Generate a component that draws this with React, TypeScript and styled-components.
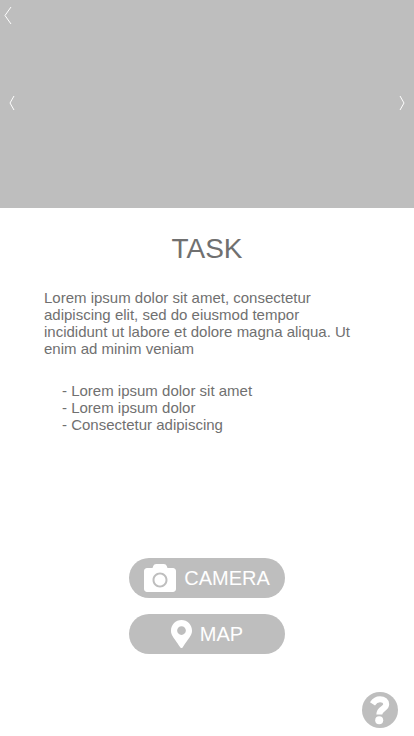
import React from "react";
import styled, { createGlobalStyle } from "styled-components";
import { FaCamera, FaMapMarkerAlt } from "react-icons/fa";

const GlobalStyle = createGlobalStyle`
  * { box-sizing: border-box; }
  html, body { margin: 0; background: #fff; }
  body, button { font-family: "Liberation Sans", Helvetica, Arial, sans-serif; }
`;

const Screen = styled.div`
  min-height: 100vh;
  display: flex;
  flex-direction: column;
  color: #707070;
`;

const Hero = styled.header`
  height: 208px;
  display: flex;
  flex-direction: column;
  background: #bebebe;
`;

const IconButton = styled.button`
  display: flex;
  align-self: flex-start;
  padding: 6px 4px;
  border: 0;
  background: none;
  color: #fff;
  cursor: pointer;
`;

const Carousel = styled.div`
  display: flex;
  justify-content: space-between;
  margin-top: 58px;
  padding: 0 5px;
`;

const Content = styled.main`
  flex: 1;
  display: flex;
  flex-direction: column;
  padding: 24px 44px 0;
`;

const Title = styled.h1`
  margin: 0 0 23px;
  font-size: 28px;
  line-height: 34px;
  font-weight: 400;
  text-align: center;
`;

const Description = styled.p`
  margin: 0 0 25px;
  padding-right: 6px;
  font-size: 15px;
  line-height: 17px;
`;

const Steps = styled.ul`
  margin: 0;
  padding: 0 0 0 18px;
  list-style: none;
  font-size: 15px;
  line-height: 17px;
`;

const Actions = styled.div`
  display: flex;
  flex-direction: column;
  align-items: center;
  gap: 16px;
  margin-top: auto;
`;

const ActionButton = styled.button`
  width: 156px;
  height: 40px;
  display: flex;
  align-items: center;
  justify-content: center;
  gap: 8px;
  padding: 0;
  border: 0;
  border-radius: 20px;
  background: #bebebe;
  color: #fff;
  font-size: 20px;
  line-height: 24px;
  cursor: pointer;
`;

const CameraIcon = styled(FaCamera)`
  width: 32px;
  height: 32px;
`;

const PinIcon = styled(FaMapMarkerAlt)`
  width: 21px;
  height: 28px;
`;

const Footer = styled.footer`
  display: flex;
  justify-content: flex-end;
  padding: 38px 16px 8px;
`;

const HelpButton = styled.button`
  display: flex;
  padding: 0;
  border: 0;
  border-radius: 50%;
  background: #bebebe;
  color: #fff;
  cursor: pointer;
`;

type ChevronProps = { width: number; height: number; right?: boolean };

function Chevron({ width, height, right = false }: ChevronProps) {
  const near = right ? 1 : width - 1;
  const tip = right ? width - 1 : 1;
  return (
    <svg width={width} height={height} fill="none" stroke="currentColor" aria-hidden="true">
      <path d={`M${near} 1 L${tip} ${height / 2} L${near} ${height - 1}`} />
    </svg>
  );
}

function QuestionIcon() {
  return (
    <svg width="36" height="36" viewBox="0 0 36 36" aria-hidden="true">
      <path
        d="M10.5 11.8 C12.6 8.6 15 7.2 18 7.2 C21.8 7.2 24.2 9.3 24.2 12.2 C24.2 17 17.3 16.5 17.3 22.5"
        fill="none"
        stroke="currentColor"
        strokeWidth="6"
      />
      <circle cx="17.2" cy="28.3" r="4" fill="currentColor" />
    </svg>
  );
}

const steps = ["Lorem ipsum dolor sit amet", "Lorem ipsum dolor", "Consectetur adipiscing"];

export default function App() {
  return (
    <>
      <GlobalStyle />
      <Screen>
        <Hero>
          <IconButton aria-label="Back">
            <Chevron width={8} height={19} />
          </IconButton>
          <Carousel>
            <IconButton aria-label="Previous image">
              <Chevron width={6} height={16} />
            </IconButton>
            <IconButton aria-label="Next image">
              <Chevron width={6} height={16} right />
            </IconButton>
          </Carousel>
        </Hero>
        <Content>
          <Title>TASK</Title>
          <Description>
            Lorem ipsum dolor sit amet, consectetur adipiscing elit, sed do eiusmod tempor
            incididunt ut labore et dolore magna aliqua. Ut enim ad minim veniam
          </Description>
          <Steps>
            {steps.map((step) => (
              <li key={step}>- {step}</li>
            ))}
          </Steps>
          <Actions>
            <ActionButton>
              <CameraIcon aria-hidden="true" />
              CAMERA
            </ActionButton>
            <ActionButton>
              <PinIcon aria-hidden="true" />
              MAP
            </ActionButton>
          </Actions>
        </Content>
        <Footer>
          <HelpButton aria-label="Help">
            <QuestionIcon />
          </HelpButton>
        </Footer>
      </Screen>
    </>
  );
}
